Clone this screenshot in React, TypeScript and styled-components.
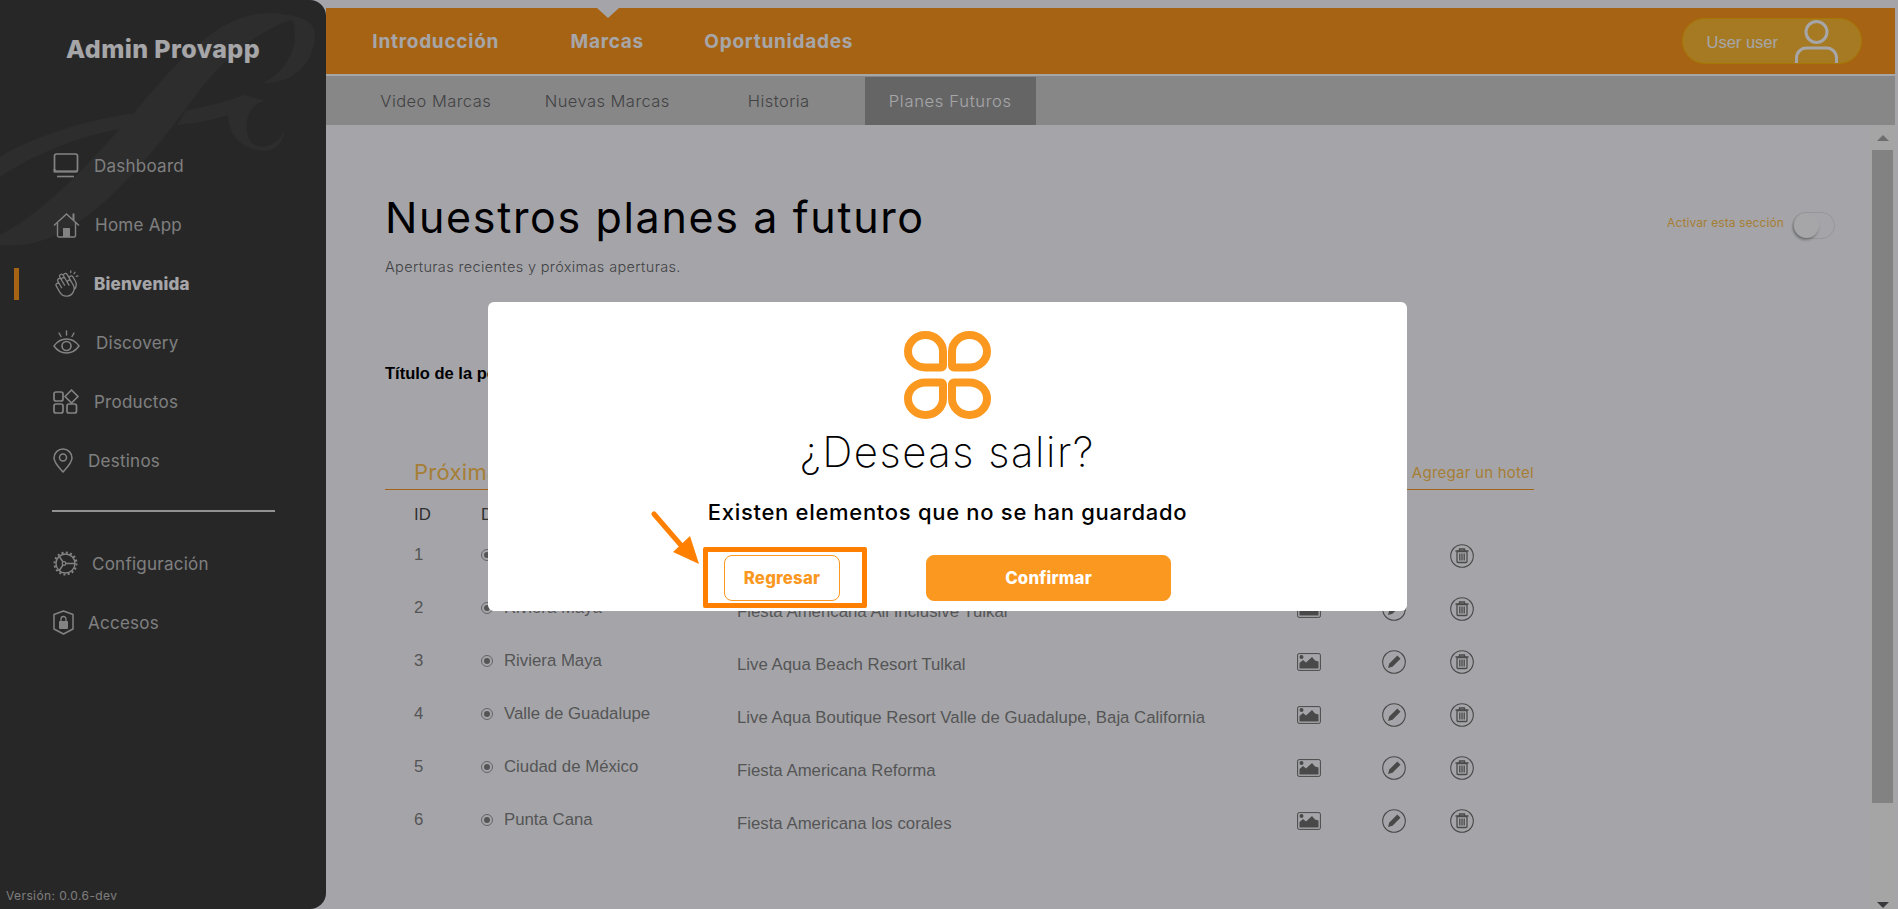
import React from 'react';
import styled, { createGlobalStyle } from 'styled-components';
import { PiHandsClappingLight } from 'react-icons/pi';

const sans = '"Inter", "Noto Sans", sans-serif';
const plain = '"Liberation Sans", Arial, sans-serif';
const orange = '#fa981f';

const GlobalStyle = createGlobalStyle`
  html, body {
    margin: 0;
    height: 100%;
    overflow: hidden;
    background: #fdfeff;
  }
  * {
    box-sizing: border-box;
  }
`;

const Shell = styled.div`
  display: flex;
  height: 909px;
  font-family: ${sans};
  background: #fdfeff;
`;

/* sidebar */
const Sidebar = styled.aside`
  position: relative;
  display: flex;
  flex-direction: column;
  flex: 0 0 326px;
  height: 909px;
  overflow: hidden;
  background: #3d3d39;
  border-radius: 0 16px 16px 0;
`;

const Watermark = styled.svg`
  position: absolute;
  left: 0;
  top: 0;
`;

const Brand = styled.h1`
  position: relative;
  margin: 34px 0 0;
  font-size: 25px;
  line-height: 30px;
  font-weight: 800;
  letter-spacing: 0.4px;
  color: #fff;
  text-align: center;
`;

const SideNav = styled.nav`
  position: relative;
  margin-top: 72px;
`;

const SideItem = styled.div`
  display: flex;
  align-items: center;
  height: 59px;
  padding-left: 14px;
`;

const Marker = styled.span<{ $on?: boolean }>`
  flex: 0 0 5px;
  height: 32px;
  margin-right: 34px;
  background: ${p => (p.$on ? '#ff981a' : 'transparent')};
`;

const IconSlot = styled.span<{ $w: number }>`
  display: flex;
  align-items: center;
  flex: 0 0 ${p => p.$w}px;
  color: #cacac6;
`;

const SideLabel = styled.span<{ $on?: boolean }>`
  font-size: 17px;
  font-weight: ${p => (p.$on ? 800 : 400)};
  letter-spacing: ${p => (p.$on ? '0.2px' : '0.25px')};
  color: ${p => (p.$on ? '#fff' : '#c4c4c0')};
`;

const SideRule = styled.div`
  height: 2px;
  margin: 20px 51px 22px 52px;
  background: #e0e0dc;
`;

const Version = styled.div`
  position: relative;
  margin-top: auto;
  padding: 0 0 6px 6px;
  font-size: 12px;
  line-height: 14px;
  letter-spacing: 0.4px;
  color: #c0c0bc;
`;

/* main column */
const Main = styled.main`
  flex: 1;
  min-width: 0;
  display: flex;
  flex-direction: column;
  padding: 8px 3px 0 0;
`;

const TopBar = styled.header`
  position: relative;
  display: flex;
  align-items: center;
  flex: 0 0 68px;
  padding: 0 33px 0 24px;
  background: #ff981a;
  border-bottom: 2px solid #fff;
`;

const Caret = styled.span`
  position: absolute;
  left: 271px;
  top: 0;
  border-left: 11px solid transparent;
  border-right: 11px solid transparent;
  border-top: 10px solid #fdfeff;
`;

const TopLink = styled.a`
  flex: 0 0 171.5px;
  text-align: center;
  font-size: 19px;
  font-weight: 700;
  letter-spacing: 0.75px;
  color: #fff;
`;

const UserPill = styled.div`
  display: flex;
  align-items: center;
  height: 46px;
  margin-left: auto;
  padding: 0 23px;
  border-radius: 23px;
  background: #ffbc31;
  border: 1px solid #ffb800;
  font-family: ${plain};
  font-size: 16.5px;
  color: #fff;
  gap: 17px;
`;

const PillText = styled.span`
  padding-top: 2px;
`;

const SubBar = styled.div`
  display: flex;
  flex: 0 0 49px;
  padding: 1px 0 0 24px;
  background: #d0d0cb;
`;

const SubLink = styled.a<{ $on?: boolean }>`
  flex: 0 0 171.5px;
  display: flex;
  align-items: center;
  justify-content: center;
  font-size: 16.5px;
  font-weight: 300;
  letter-spacing: ${p => (p.$on ? '0.7px' : '0.45px')};
  color: ${p => (p.$on ? '#fff' : '#666')};
  background: ${p => (p.$on ? '#9c9c97' : 'transparent')};
`;

const Body = styled.div`
  flex: 1;
  display: flex;
  min-height: 0;
`;

const Content = styled.div`
  flex: 1;
  min-width: 0;
  padding: 66px 35px 0 59px;
`;

const TitleRow = styled.div`
  display: flex;
  align-items: flex-end;
  justify-content: space-between;
`;

const PageTitle = styled.h2`
  margin: 0;
  font-size: 43px;
  line-height: 52px;
  font-weight: 400;
  letter-spacing: 1.65px;
  color: #000;
`;

const ToggleWrap = styled.div`
  display: flex;
  align-items: center;
  gap: 8px;
  margin-bottom: 4px;
  font-size: 12px;
  letter-spacing: 0.1px;
  color: #ffc24d;
`;

const ToggleLabel = styled.span`
  margin-bottom: 6px;
`;

const ToggleTrack = styled.span`
  display: flex;
  align-items: center;
  width: 43px;
  height: 27px;
  padding-left: 1px;
  border-radius: 14px;
  background: #fdfeff;
  border: 1px solid #e6e6e6;
`;

const ToggleKnob = styled.span`
  width: 25px;
  height: 25px;
  border-radius: 50%;
  background: #fff;
  box-shadow: -1px 2px 3px rgba(0, 0, 0, 0.3);
`;

const Lead = styled.p`
  margin: 15px 0 0;
  font-size: 14.5px;
  line-height: 18px;
  font-weight: 300;
  letter-spacing: 0.35px;
  color: #666;
`;

const FieldTitle = styled.div`
  margin-top: 87px;
  font-family: ${plain};
  font-size: 16.5px;
  font-weight: 700;
  line-height: 20px;
  color: #000;
`;

const SectionHead = styled.div`
  display: flex;
  align-items: center;
  justify-content: space-between;
  width: 1149px;
  height: 36px;
  margin-top: 71px;
  padding-left: 29px;
  border-bottom: 1px solid ${orange};
  color: #ffc24d;
`;

const SectionTitle = styled.span`
  font-size: 22px;
  letter-spacing: 0.3px;
`;

const AddLink = styled.a`
  padding-top: 2px;
  font-size: 15px;
  letter-spacing: 0.25px;
`;

const TableGrid = styled.div`
  width: 1149px;
  margin-top: 15px;
  padding-left: 29px;
  font-family: ${plain};
  font-size: 16.8px;
  color: #838380;
`;

const HeadRow = styled.div`
  display: grid;
  grid-template-columns: 67px 256px 560px 85px 68px 24px;
  height: 20px;
  margin-bottom: 3px;
  line-height: 20px;
  color: #4a4a47;
`;

const Row = styled.div`
  display: grid;
  grid-template-columns: 67px 256px 560px 85px 68px 24px;
  align-items: center;
  height: 53px;
`;

const Dest = styled.span`
  display: flex;
  align-items: center;
  gap: 11px;
`;

const Radio = styled.span`
  display: flex;
  align-items: center;
  justify-content: center;
  width: 12px;
  height: 12px;
  border-radius: 50%;
  border: 1px solid #9a9a9a;
  &::after {
    content: '';
    width: 6px;
    height: 6px;
    border-radius: 50%;
    background: #838380;
  }
`;

const Hotel = styled.span`
  padding-top: 8px;
  white-space: nowrap;
`;

const ActionIcon = styled.span`
  display: flex;
  padding-top: 3px;
  color: #70706c;
`;

const ScrollTrack = styled.div`
  display: flex;
  flex-direction: column;
  align-items: center;
  flex: 0 0 25px;
  background: #fdfdf9;
`;

const ScrollBtn = styled.span`
  display: flex;
  align-items: center;
  justify-content: center;
  flex: 0 0 25px;
`;

const ScrollUp = styled.span`
  border-left: 6px solid transparent;
  border-right: 6px solid transparent;
  border-bottom: 6px solid #a8a8a4;
`;

const ScrollThumb = styled.span`
  width: 21px;
  height: 653px;
  background: #c8c8c3;
`;

const ScrollDown = styled.span`
  margin-top: auto;
  margin-bottom: 1px;
  border-left: 6px solid transparent;
  border-right: 6px solid transparent;
  border-top: 6px solid #555;
`;

/* modal */
const Overlay = styled.div`
  position: fixed;
  inset: 0;
  display: flex;
  align-items: center;
  justify-content: center;
  padding: 4px 3px 0 0;
  background: rgba(0, 0, 10, 0.35);
`;

const Modal = styled.div`
  display: flex;
  flex-direction: column;
  align-items: center;
  width: 919px;
  height: 309px;
  padding-top: 29px;
  background: #fff;
  border-radius: 6px;
  font-family: ${sans};
`;

const ModalTitle = styled.h3`
  margin: 8px 0 0;
  font-size: 42px;
  line-height: 50px;
  font-weight: 200;
  letter-spacing: 1.5px;
  color: #000;
`;

const ModalText = styled.p`
  margin: 23px 0 0;
  font-size: 22px;
  line-height: 24px;
  font-weight: 500;
  letter-spacing: 0.7px;
  color: #000;
  white-space: nowrap;
`;

const ButtonRow = styled.div`
  position: relative;
  display: flex;
  gap: 86px;
  margin-top: 31px;
`;

const Button = styled.button<{ $solid?: boolean }>`
  width: ${p => (p.$solid ? 245 : 116)}px;
  height: 46px;
  border-radius: 8px;
  border: 1.5px solid ${orange};
  background: ${p => (p.$solid ? orange : '#fff')};
  color: ${p => (p.$solid ? '#fff' : orange)};
  font-family: ${sans};
  font-size: 16.8px;
  font-weight: 800;
  letter-spacing: 0.2px;
`;

const Callout = styled.span`
  position: absolute;
  left: -21px;
  top: -8px;
  width: 164px;
  height: 61px;
  border: 5px solid #ff8000;
  border-radius: 2px;
`;

const CalloutArrow = styled.svg`
  position: absolute;
  left: -73px;
  top: -44px;
`;

const MonitorIcon = () => (
  <svg width="26" height="25" viewBox="0 0 26 25" fill="none" stroke="currentColor" strokeWidth="1.7">
    <rect x="1.5" y="1" width="23" height="17.5" rx="2" />
    <path d="M4 23.5h17" strokeWidth="1.6" />
    <path d="M1.5 16v2.5h23" strokeWidth="2" />
  </svg>
);

const HomeIcon = () => (
  <svg width="27" height="26" viewBox="0 0 27 26" fill="none" stroke="currentColor" strokeWidth="1.4">
    <path d="M1 13.5 13.5 2 26 13.5" />
    <path d="M20.5 8V1.5" strokeWidth="2" />
    <path d="M4.5 11v13a1.5 1.5 0 0 0 1.5 1h15a1.5 1.5 0 0 0 1.5-1V11" />
    <rect x="10" y="16" width="7" height="9" fill="currentColor" stroke="none" />
  </svg>
);

const EyeIcon = () => (
  <svg width="27" height="25" viewBox="0 0 27 25" fill="none" stroke="currentColor" strokeWidth="1.4" strokeLinecap="round">
    <path d="M1 16c3.5-5 8-7 12.500-7S22.500 11 26 16c-3.500 5-8 7-12.500 7S4.500 21 1 16Z" />
    <circle cx="13.500" cy="16" r="4.500" strokeWidth="1.600" />
    <path d="M13.500 1v4M6 3l2 3.500M21 3l-2 3.500" />
  </svg>
);

const ProductsIcon = () => (
  <svg width="26" height="25" viewBox="0 0 26 25" fill="none" stroke="currentColor" strokeWidth="1.7">
    <rect x="1" y="3" width="9" height="9" rx="2" />
    <path d="M18.500 1 25 7.500 18.500 14 12 7.500Z" strokeLinejoin="round" />
    <rect x="1" y="15" width="9" height="9" rx="2" />
    <rect x="14" y="15" width="9.500" height="9" rx="2" />
  </svg>
);

const PinIcon = () => (
  <svg width="20" height="25" viewBox="0 0 20 25" fill="none" stroke="currentColor" strokeWidth="1.5">
    <path d="M10 24C5 18.500 1 14.500 1 10a9 9 0 0 1 18 0c0 4.500-4 8.500-9 14Z" strokeLinejoin="round" />
    <circle cx="10" cy="9.500" r="3.500" />
  </svg>
);

const GearIcon = () => (
  <svg width="25" height="25" viewBox="0 0 25 25" fill="none" stroke="currentColor">
    <circle cx="12.500" cy="12.500" r="9.500" strokeWidth="1.400" />
    <circle cx="12.500" cy="12.500" r="11" strokeWidth="2" strokeDasharray="2 2.320" />
    <circle cx="11" cy="12.500" r="1.800" strokeWidth="1.300" />
    <path d="M13 12.500h9M10 11 6 5M10 14l-4 6" strokeWidth="1.400" />
  </svg>
);

const ShieldIcon = () => (
  <svg width="21" height="25" viewBox="0 0 21 25" fill="none" stroke="currentColor" strokeWidth="1.500">
    <path d="M10.500 1 20 4.500V19l-9.500 5L1 19V4.500Z" strokeLinejoin="round" />
    <rect x="6" y="11" width="9" height="8" rx="1" fill="currentColor" stroke="none" />
    <path d="M8 11V9a2.500 2.500 0 0 1 5 0v2" strokeWidth="1.300" />
  </svg>
);

const UserIcon = () => (
  <svg width="43" height="44" viewBox="0 0 43 44" fill="none" stroke="#fff" strokeWidth="3">
    <circle cx="21.500" cy="13" r="10.500" />
    <path d="M1.500 44V39a10 10 0 0 1 10-10h20a10 10 0 0 1 10 10v5" />
  </svg>
);

const ImageIcon = () => (
  <svg width="24" height="18" viewBox="0 0 24 18" fill="none">
    <rect x="0.600" y="0.600" width="22.800" height="16.800" rx="1.500" stroke="currentColor" strokeWidth="1" />
    <circle cx="4.500" cy="4" r="2" fill="currentColor" />
    <path d="M2.500 15.500V10L6 7l3 2.500L15 4l3 3.500 3.500 1v7Z" fill="currentColor" />
  </svg>
);

const PencilIcon = () => (
  <svg width="24" height="24" viewBox="0 0 24 24" fill="none" stroke="currentColor">
    <circle cx="12" cy="12" r="11.300" strokeWidth="1.100" />
    <path d="m6 18 1.300-4.500 8-8 3.200 3.200-8 8Z" fill="currentColor" stroke="none" />
  </svg>
);

const TrashIcon = () => (
  <svg width="24" height="24" viewBox="0 0 24 24" fill="none" stroke="currentColor">
    <circle cx="12" cy="12" r="11.300" strokeWidth="1.100" />
    <path d="M5.500 7h13M9.500 7V5h5v2" strokeWidth="1.300" />
    <rect x="7" y="7.500" width="10" height="11" rx="1" strokeWidth="1.300" />
    <path d="M9.800 9.500v7M12 9.500v7M14.200 9.500v7" strokeWidth="1.300" />
  </svg>
);

const LogoPetal = ({ flip }: { flip: string }) => (
  <path
    transform={flip}
    d="M21.500 36.500H37a2 2 0 0 0 2-2V20.500a17.500 16.500 0 1 0-35 0c0 9 8 16 17.500 16Z"
  />
);

const Logo = () => (
  <svg width="87" height="88" viewBox="0 0 87 88" fill="none" stroke={orange} strokeWidth="8">
    <LogoPetal flip="" />
    <LogoPetal flip="translate(87 0) scale(-1 1)" />
    <LogoPetal flip="translate(0 88) scale(1 -1)" />
    <LogoPetal flip="translate(87 88) scale(-1 -1)" />
  </svg>
);

const mainItems = [
  { label: 'Dashboard', icon: <MonitorIcon />, slot: 41 },
  { label: 'Home App', icon: <HomeIcon />, slot: 42 },
  { label: 'Bienvenida', icon: <PiHandsClappingLight size={27} />, slot: 41, active: true },
  { label: 'Discovery', icon: <EyeIcon />, slot: 43 },
  { label: 'Productos', icon: <ProductsIcon />, slot: 41 },
  { label: 'Destinos', icon: <PinIcon />, slot: 35 }
];

const bottomItems = [
  { label: 'Configuración', icon: <GearIcon />, slot: 39 },
  { label: 'Accesos', icon: <ShieldIcon />, slot: 35 }
];

const rows = [
  { id: 1, dest: 'Riviera Maya', hotel: 'Fiesta Americana Condesa Cancún' },
  { id: 2, dest: 'Riviera Maya', hotel: 'Fiesta Americana All Inclusive Tulkal' },
  { id: 3, dest: 'Riviera Maya', hotel: 'Live Aqua Beach Resort Tulkal' },
  { id: 4, dest: 'Valle de Guadalupe', hotel: 'Live Aqua Boutique Resort Valle de Guadalupe, Baja California' },
  { id: 5, dest: 'Ciudad de México', hotel: 'Fiesta Americana Reforma' },
  { id: 6, dest: 'Punta Cana', hotel: 'Fiesta Americana los corales' }
];

const renderItem = (item: { label: string; icon: React.ReactNode; slot: number; active?: boolean }) => (
  <SideItem key={item.label}>
    <Marker $on={item.active} />
    <IconSlot $w={item.slot}>{item.icon}</IconSlot>
    <SideLabel $on={item.active}>{item.label}</SideLabel>
  </SideItem>
);

const App = () => (
  <Shell>
    <GlobalStyle />
    <Sidebar>
      <Watermark width="326" height="340" viewBox="0 0 978 1020" fill="#454541">
        <path d="M0 705C130 640 270 490 400 340C500 225 640 40 800 40C880 40 945 60 945 100C945 190 880 250 790 250C860 210 885 150 885 110C885 75 880 60 870 60C760 100 660 190 600 270C500 400 280 720 60 735C40 737 15 737 0 735Z" />
        <path d="M0 470C120 400 270 360 400 340L370 385C230 410 110 460 0 530Z" />
        <path d="M560 330C620 320 680 305 730 285L795 302C760 310 740 340 740 380C740 415 755 440 785 440C815 440 840 420 853 392C850 430 825 452 795 452C730 452 685 410 685 345C640 360 590 368 530 375Z" />
      </Watermark>
      <Brand>Admin Provapp</Brand>
      <SideNav>
        {mainItems.map(renderItem)}
        <SideRule />
        {bottomItems.map(renderItem)}
      </SideNav>
      <Version>Versión: 0.0.6-dev</Version>
    </Sidebar>
    <Main>
      <TopBar>
        <Caret />
        <TopLink>Introducción</TopLink>
        <TopLink>Marcas</TopLink>
        <TopLink>Oportunidades</TopLink>
        <UserPill>
          <PillText>User user</PillText>
          <UserIcon />
        </UserPill>
      </TopBar>
      <SubBar>
        <SubLink>Video Marcas</SubLink>
        <SubLink>Nuevas Marcas</SubLink>
        <SubLink>Historia</SubLink>
        <SubLink $on>Planes Futuros</SubLink>
      </SubBar>
      <Body>
        <Content>
          <TitleRow>
            <PageTitle>Nuestros planes a futuro</PageTitle>
            <ToggleWrap>
              <ToggleLabel>Activar esta sección</ToggleLabel>
              <ToggleTrack>
                <ToggleKnob />
              </ToggleTrack>
            </ToggleWrap>
          </TitleRow>
          <Lead>Aperturas recientes y próximas aperturas.</Lead>
          <FieldTitle>Título de la portada</FieldTitle>
          <SectionHead>
            <SectionTitle>Próximas aperturas</SectionTitle>
            <AddLink>Agregar un hotel</AddLink>
          </SectionHead>
          <TableGrid>
            <HeadRow>
              <span>ID</span>
              <span>Destino</span>
              <span>Hotel</span>
            </HeadRow>
            {rows.map(row => (
              <Row key={row.id}>
                <span>{row.id}</span>
                <Dest>
                  <Radio />
                  {row.dest}
                </Dest>
                <Hotel>{row.hotel}</Hotel>
                <ActionIcon>
                  <ImageIcon />
                </ActionIcon>
                <ActionIcon>
                  <PencilIcon />
                </ActionIcon>
                <ActionIcon>
                  <TrashIcon />
                </ActionIcon>
              </Row>
            ))}
          </TableGrid>
        </Content>
        <ScrollTrack>
          <ScrollBtn>
            <ScrollUp />
          </ScrollBtn>
          <ScrollThumb />
          <ScrollDown />
        </ScrollTrack>
      </Body>
    </Main>
    <Overlay>
      <Modal>
        <Logo />
        <ModalTitle>¿Deseas salir?</ModalTitle>
        <ModalText>Existen elementos que no se han guardado</ModalText>
        <ButtonRow>
          <Button>Regresar</Button>
          <Button $solid>Confirmar</Button>
          <Callout />
          <CalloutArrow width="52" height="56" viewBox="0 0 52 56">
            <path d="M3 3 35 40" stroke="#ff8000" strokeWidth="5" strokeLinecap="round" />
            <path d="M48 53 22 41 39 25Z" fill="#ff8000" />
          </CalloutArrow>
        </ButtonRow>
      </Modal>
    </Overlay>
  </Shell>
);

export default App;
